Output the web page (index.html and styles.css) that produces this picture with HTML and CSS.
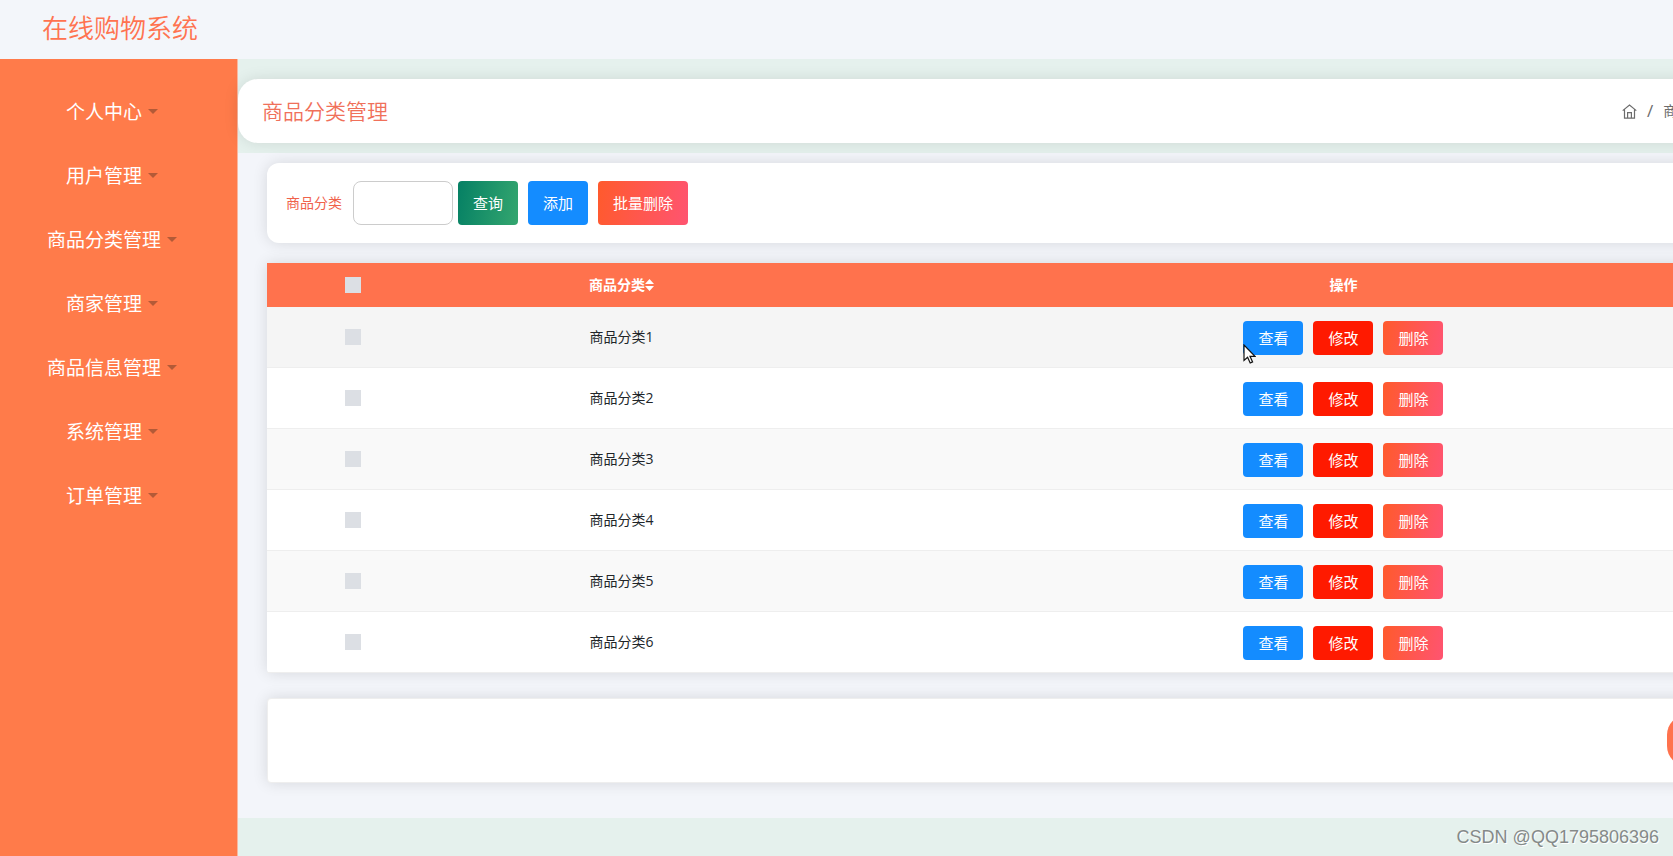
FILE: index.html
```html
<!DOCTYPE html>
<html lang="zh-CN">
<head>
<meta charset="utf-8">
<title>在线购物系统</title>
<link rel="stylesheet" href="styles.css">
</head>
<body>
<header class="topbar"><h1 class="brand">在线购物系统</h1></header>
<div class="layout">
  <nav class="sidebar">
    <a class="menu-item" href="#">个人中心<span class="caret"></span></a>
    <a class="menu-item" href="#">用户管理<span class="caret"></span></a>
    <a class="menu-item" href="#">商品分类管理<span class="caret"></span></a>
    <a class="menu-item" href="#">商家管理<span class="caret"></span></a>
    <a class="menu-item" href="#">商品信息管理<span class="caret"></span></a>
    <a class="menu-item" href="#">系统管理<span class="caret"></span></a>
    <a class="menu-item" href="#">订单管理<span class="caret"></span></a>
  </nav>
  <main class="main">
    <div class="title-card">
      <h2 class="page-title">商品分类管理</h2>
      <div class="breadcrumb">
        <a class="home" href="#" aria-label="首页"><svg width="15" height="15" viewBox="0 0 15 15" fill="none" stroke="currentColor" stroke-width="1.2"><path d="M.7 6.600 7.500 1l6.800 5.600M2.500 5.400v8.700h10V5.400M5.600 14V8.600h3.800V14"/></svg></a>
        <span class="slash">/</span>
        <span>商品分类管理</span>
      </div>
    </div>
    <div class="content">
      <form class="filter-card">
        <label class="filter-label" for="category">商品分类</label>
        <input class="filter-input" id="category" type="text">
        <button class="btn tall green" type="button">查询</button>
        <button class="btn tall blue" type="button">添加</button>
        <button class="btn tall coral" type="button">批量删除</button>
      </form>
      <table class="grid">
        <colgroup><col class="col-check"><col class="col-name"><col></colgroup>
        <thead>
          <tr><th><input class="check" type="checkbox" aria-label="全选"></th><th><span class="sortable">商品分类<svg width="9" height="12" viewBox="0 0 9 12" fill="currentColor"><path d="M4.500 0 9 5H0zM0 7h9l-4.500 5z"/></svg></span></th><th>操作</th></tr>
        </thead>
        <tbody>
          <tr class="hovered"><td><input class="check" type="checkbox" aria-label="商品分类1"></td><td>商品分类1</td><td><div class="actions"><button class="btn blue" type="button">查看</button><button class="btn red" type="button">修改</button><button class="btn coral" type="button">删除</button><svg class="pointer" width="13" height="20" viewBox="0 0 13 20"><path d="M1 1v15.500l3.600-3.300 2.600 5.800 2.400-1.100-2.600-5.600H12z" fill="#fff" stroke="#111" stroke-width="1.200"/></svg></div></td></tr>
          <tr><td><input class="check" type="checkbox" aria-label="商品分类2"></td><td>商品分类2</td><td><div class="actions"><button class="btn blue" type="button">查看</button><button class="btn red" type="button">修改</button><button class="btn coral" type="button">删除</button></div></td></tr>
          <tr><td><input class="check" type="checkbox" aria-label="商品分类3"></td><td>商品分类3</td><td><div class="actions"><button class="btn blue" type="button">查看</button><button class="btn red" type="button">修改</button><button class="btn coral" type="button">删除</button></div></td></tr>
          <tr><td><input class="check" type="checkbox" aria-label="商品分类4"></td><td>商品分类4</td><td><div class="actions"><button class="btn blue" type="button">查看</button><button class="btn red" type="button">修改</button><button class="btn coral" type="button">删除</button></div></td></tr>
          <tr><td><input class="check" type="checkbox" aria-label="商品分类5"></td><td>商品分类5</td><td><div class="actions"><button class="btn blue" type="button">查看</button><button class="btn red" type="button">修改</button><button class="btn coral" type="button">删除</button></div></td></tr>
          <tr><td><input class="check" type="checkbox" aria-label="商品分类6"></td><td>商品分类6</td><td><div class="actions"><button class="btn blue" type="button">查看</button><button class="btn red" type="button">修改</button><button class="btn coral" type="button">删除</button></div></td></tr>
        </tbody>
      </table>
      <div class="pager-card"><button class="pager-btn" type="button" aria-label="上一页"></button></div>
    </div>
  </main>
</div>
<div class="watermark">CSDN @QQ1795806396</div>
</body>
</html>
```

FILE: styles.css
```css
* { box-sizing: border-box; }
body {
  margin: 0;
  min-height: 100vh;
  display: flex;
  flex-direction: column;
  overflow: hidden;
  background: #e5f1ed;
  color: #212529;
  font: 14px/20px "Open Sans", "Noto Sans CJK SC", sans-serif;
}
a { color: inherit; text-decoration: none; }
.topbar { background: #f3f6fa; padding: 8px 42px 11px; }
.brand {
  margin: 0;
  color: #ff7350;
  font-size: 26px;
  line-height: 40px;
  font-weight: 350;
}
.layout { flex: 1; display: flex; }
.sidebar {
  flex: none;
  width: 238px;
  padding: 21px 13px 20px 0;
  border-right: 1px solid #f9b7a0;
  background: #ff7b4a;
}
.menu-item {
  display: flex;
  align-items: center;
  justify-content: center;
  gap: 6px;
  height: 64px;
  color: #fff;
  font-size: 19px;
}
.caret {
  margin-bottom: 2px;
  border: 5px solid transparent;
  border-top-color: #b35a37;
  border-bottom: 0;
}
.main { flex: none; width: 100vw; padding-top: 20px; }
.title-card {
  display: flex;
  align-items: center;
  justify-content: space-between;
  padding: 12px 24px;
  border-radius: 20px;
  background: #fff;
  box-shadow: 0 0 15px rgba(0, 0, 0, .1);
}
.page-title {
  margin: 0;
  color: #f0705a;
  font-size: 21px;
  line-height: 40px;
  font-weight: 350;
}
.breadcrumb {
  display: flex;
  align-items: center;
  width: 265px;
  color: #6c6c6c;
}
.home { display: flex; }
.slash { padding: 0 10px; font-size: 17px; }
.content {
  margin-top: 10px;
  padding: 10px 29px 35px;
  background: #f3f5fa;
}
.filter-card, .grid, .pager-card {
  background: #fff;
  box-shadow: 0 0 15px rgba(0, 0, 0, .12);
}
.filter-card {
  display: flex;
  align-items: center;
  padding: 18px 19px;
  border-radius: 12px;
}
.filter-label { margin-right: 11px; color: #f0624b; }
.filter-input {
  width: 100px;
  height: 44px;
  margin-right: 5px;
  padding: 6px 12px;
  border: 1px solid #ccc;
  border-radius: 8px;
}
.filter-card .btn { margin-right: 10px; }
.btn {
  height: 34px;
  padding: 0 15px;
  border: 0;
  border-radius: 4px;
  color: #fff;
  font: inherit;
  font-size: 15px;
}
.tall { height: 44px; }
.green { background: linear-gradient(100deg, #058064, #34a66f); }
.blue { background: #148cff; }
.red { background: #ff1a00; }
.coral { background: linear-gradient(100deg, #ff5a2c, #ff5471); }
.grid {
  width: 100%;
  margin-top: 20px;
  border-collapse: separate;
  border-spacing: 0;
  table-layout: fixed;
  border-radius: 0 0 4px 4px;
  text-align: center;
}
.col-check { width: 10.6%; }
.col-name { width: 22.7%; }
.grid th {
  height: 44px;
  padding: 0;
  background: #ff724d;
  color: #fff;
  font-weight: 700;
}
.sortable { display: inline-flex; align-items: center; }
.grid td { height: 61px; padding: 0; border-bottom: 1px solid #eee; }
.grid tbody tr:nth-child(odd) { background: #f9f9f9; }
.grid tbody tr.hovered { background: #f5f5f5; }
.check {
  appearance: none;
  display: block;
  width: 16px;
  height: 16px;
  margin: 0 auto;
  background: #dcdfe4;
}
.actions {
  position: relative;
  display: flex;
  justify-content: center;
  gap: 10px;
  width: 200px;
  margin: 0 auto;
  padding-top: 2px;
}
.pointer { position: absolute; left: 0; top: 25px; }
.pager-card {
  display: flex;
  margin-top: 25px;
  padding: 16px 0;
  border: 1px solid #eee;
  border-radius: 4px;
  padding-left: calc(100vw - 274px);
}
.pager-btn {
  width: 80px;
  height: 51px;
  border: 0;
  border-radius: 20px;
  background: #ff724d;
}
.watermark {
  position: absolute;
  right: 14px;
  bottom: 9px;
  color: #858a89;
  font: 18px/20px "Liberation Sans", sans-serif;
  text-shadow: 1px 1px 0 #fff;
}
```
